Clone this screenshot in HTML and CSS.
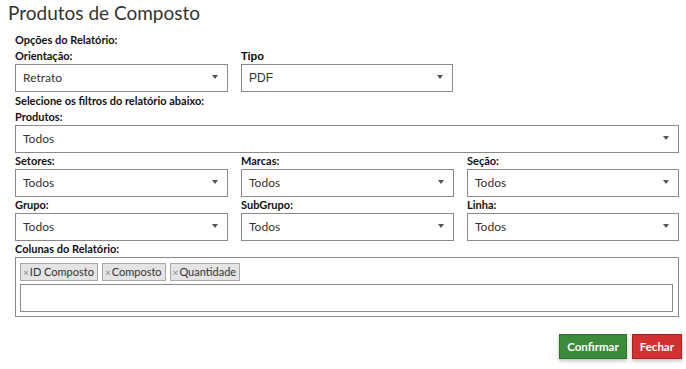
FILE: index.html
```html
<!DOCTYPE html>
<html lang="pt">
<head>
<meta charset="UTF-8">
<title>Produtos de Composto</title>
<link rel="stylesheet" href="styles.css">
</head>
<body>

<div class="modal">
  <h1 class="modal-title">Produtos de Composto</h1>

  <div class="modal-body">
    <div class="section-label">Opções do Relatório:</div>
    <div class="row row-2">
      <div class="field">
        <label>Orientação:</label>
        <div class="select">Retrato<span class="caret"></span></div>
      </div>
      <div class="field">
        <label class="plain">Tipo</label>
        <div class="select plain">PDF<span class="caret"></span></div>
      </div>
    </div>

    <div class="section-label">Selecione os filtros do relatório abaixo:</div>
    <div class="field">
      <label>Produtos:</label>
      <div class="select">Todos<span class="caret"></span></div>
    </div>

    <div class="row row-3">
      <div class="field">
        <label>Setores:</label>
        <div class="select">Todos<span class="caret"></span></div>
      </div>
      <div class="field">
        <label>Marcas:</label>
        <div class="select">Todos<span class="caret"></span></div>
      </div>
      <div class="field">
        <label>Seção:</label>
        <div class="select">Todos<span class="caret"></span></div>
      </div>
    </div>

    <div class="row row-3">
      <div class="field">
        <label>Grupo:</label>
        <div class="select">Todos<span class="caret"></span></div>
      </div>
      <div class="field">
        <label>SubGrupo:</label>
        <div class="select">Todos<span class="caret"></span></div>
      </div>
      <div class="field">
        <label>Linha:</label>
        <div class="select">Todos<span class="caret"></span></div>
      </div>
    </div>

    <div class="field">
      <label>Colunas do Relatório:</label>
      <div class="multi">
        <div class="tags">
          <span class="tag"><span class="tag-x">×</span>ID Composto</span>
          <span class="tag"><span class="tag-x">×</span>Composto</span>
          <span class="tag"><span class="tag-x">×</span>Quantidade</span>
        </div>
        <div class="multi-input"></div>
      </div>
    </div>
  </div>

  <div class="modal-footer">
    <button class="btn btn-confirm">Confirmar</button>
    <button class="btn btn-close">Fechar</button>
  </div>
</div>

</body>
</html>
```

FILE: styles.css
```css
body {
  margin: 0;
  font-family: Lato, "Noto Sans", sans-serif;
  color: #222;
  background: #fff;
}

.modal {
  width: 686px;
  height: 369px;
}

.modal-title {
  margin: 0;
  padding: 2px 8px 0;
  font-size: 19px;
  font-weight: normal;
  line-height: 22px;
  color: #333;
}

.modal-body {
  padding: 7px 7px 0 15px;
}

.section-label,
.field label {
  display: block;
  font-size: 11px;
  font-weight: bold;
  line-height: 16px;
  color: #111;
}

.section-label {
  line-height: 17px;
}

.field label.plain {
  font-family: "Liberation Sans", Arial, sans-serif;
  font-size: 11px;
}

.row {
  display: grid;
  column-gap: 13px;
}

.row-2 {
  grid-template-columns: 213px 212px;
}

.row-3 {
  grid-template-columns: 213px 213px 212px;
}

.select {
  position: relative;
  box-sizing: border-box;
  height: 28px;
  padding: 0 20px 0 7px;
  border: 1px solid #8a8a8a;
  font-size: 12px;
  line-height: 26px;
  color: #333;
  background: #fff;
}

.select.plain {
  font-family: "Liberation Sans", Arial, sans-serif;
}

.caret {
  position: absolute;
  right: 9px;
  top: 10px;
  width: 0;
  height: 0;
  border-left: 3px solid transparent;
  border-right: 3px solid transparent;
  border-top: 4px solid #555;
}

.multi {
  box-sizing: border-box;
  height: 60px;
  border: 1px solid #8a8a8a;
  padding: 5px 5px 5px 4px;
}

.tags {
  display: flex;
  gap: 4px;
  height: 18px;
  margin-bottom: 3px;
}

.tag {
  box-sizing: border-box;
  height: 18px;
  padding: 0 3px 0 2px;
  border: 1px solid #a8a8a8;
  background: #e4e4e4;
  font-size: 11px;
  line-height: 16px;
  color: #333;
}

.tag-x {
  color: #888;
  font-size: 10px;
  margin-right: 1px;
}

.multi-input {
  box-sizing: border-box;
  height: 28px;
  border: 1px solid #8a8a8a;
}

.modal-footer {
  display: flex;
  justify-content: flex-end;
  gap: 5px;
  padding: 17px 4px 0 0;
}

.btn {
  height: 25px;
  padding: 0 7px;
  border: 1px solid;
  font-family: Lato, "Noto Sans", sans-serif;
  font-size: 11.5px;
  font-weight: bold;
  color: #fff;
  box-shadow: 0 2px 4px rgba(0, 0, 0, 0.25);
  cursor: pointer;
}

.btn-confirm {
  background: #3b8b3b;
  border-color: #2e6e2e;
}

.btn-close {
  background: #d33131;
  border-color: #a82424;
}
```
